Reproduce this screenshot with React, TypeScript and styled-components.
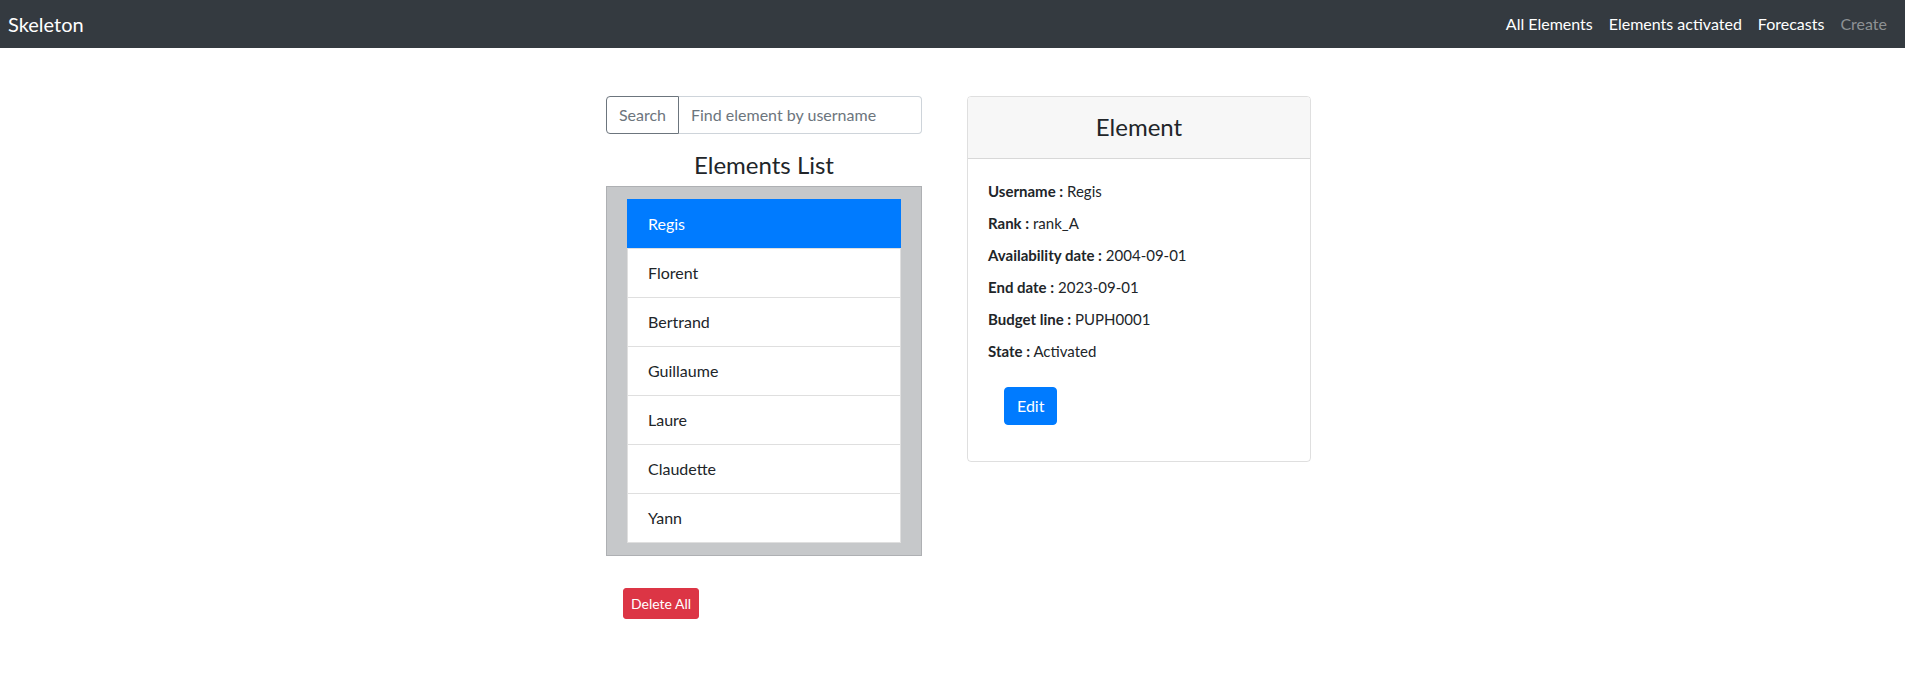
import React from "react";
import styled, { createGlobalStyle } from "styled-components";

const Global = createGlobalStyle`
  * { box-sizing: border-box; }
  body {
    margin: 0;
    font-family: "Segoe UI", Lato, "Noto Sans", sans-serif;
    font-size: 16px;
    line-height: 1.5;
    color: #212529;
    background: #fff;
  }
`;

const NavBar = styled.nav`
  height: 48px;
  background: #343a40;
  display: flex;
  align-items: center;
  justify-content: space-between;
  padding: 0 10px 0 8px;
`;

const Brand = styled.a`
  color: #fff;
  font-size: 20px;
  line-height: 30px;
  text-decoration: none;
`;

const NavLinks = styled.div`
  display: flex;
`;

const NavLink = styled.a<{ $disabled?: boolean }>`
  color: ${(p) => (p.$disabled ? "rgba(255,255,255,0.45)" : "#fff")};
  padding: 8px;
  text-decoration: none;
  line-height: 24px;
`;

const Main = styled.main`
  display: flex;
  justify-content: center;
  align-items: flex-start;
  gap: 45px;
  padding: 48px 0 0 12px;
`;

const LeftCol = styled.div`
  width: 316px;
  display: flex;
  flex-direction: column;
`;

const InputGroup = styled.div`
  display: flex;
  height: 38px;
`;

const SearchButton = styled.button`
  font: inherit;
  color: #6c757d;
  background: #fff;
  border: 1px solid #6c757d;
  border-radius: 4px 0 0 4px;
  padding: 0 10px;
  width: 73px;
  cursor: pointer;
`;

const SearchInput = styled.input`
  flex: 1;
  min-width: 0;
  font: inherit;
  color: #495057;
  border: 1px solid #ced4da;
  border-left: none;
  border-radius: 0 4px 4px 0;
  padding: 6px 12px;
  &::placeholder { color: #6c757d; }
`;

const ListTitle = styled.h4`
  margin: 17px 0 6px;
  font-size: 24px;
  font-weight: 400;
  line-height: 1.2;
  text-align: center;
`;

const ListBox = styled.div`
  background: #c6c8ca;
  border: 1px solid #aeb0b3;
  padding: 12px 20px;
`;

const List = styled.ul`
  list-style: none;
  margin: 0;
  padding: 0;
  background: #fff;
`;

const Item = styled.li<{ $active?: boolean }>`
  padding: 12px 20px;
  line-height: 24px;
  border: 1px solid ${(p) => (p.$active ? "#007bff" : "rgba(0,0,0,0.125)")};
  margin-top: -1px;
  background: ${(p) => (p.$active ? "#007bff" : "#fff")};
  color: ${(p) => (p.$active ? "#fff" : "#212529")};
  &:first-child { margin-top: 0; }
`;

const DangerButton = styled.button`
  align-self: flex-start;
  margin: 32px 0 0 17px;
  font: inherit;
  font-size: 14px;
  line-height: 21px;
  padding: 4px 7px;
  color: #fff;
  background: #dc3545;
  border: 1px solid #dc3545;
  border-radius: 3px;
`;

const Card = styled.div`
  width: 344px;
  border: 1px solid rgba(0,0,0,0.125);
  border-radius: 4px;
  overflow: hidden;
`;

const CardHeader = styled.div`
  background: #f7f7f7;
  border-bottom: 1px solid rgba(0,0,0,0.125);
  height: 62px;
  display: flex;
  align-items: center;
  justify-content: center;
`;

const CardTitle = styled.h4`
  margin: 0;
  font-size: 24px;
  font-weight: 400;
  line-height: 1.2;
`;

const CardBody = styled.div`
  padding: 20px;
`;

const Field = styled.p`
  margin: 0 0 8px;
  line-height: 24px;
  font-size: 15px;
  & b { font-weight: 700; }
`;

const PrimaryButton = styled.button`
  margin: 16px;
  font: inherit;
  line-height: 24px;
  padding: 6px 12px;
  color: #fff;
  background: #007bff;
  border: 1px solid #007bff;
  border-radius: 4px;
`;

const names = ["Regis", "Florent", "Bertrand", "Guillaume", "Laure", "Claudette", "Yann"];
const fields: [string, string][] = [
  ["Username", "Regis"],
  ["Rank", "rank_A"],
  ["Availability date", "2004-09-01"],
  ["End date", "2023-09-01"],
  ["Budget line", "PUPH0001"],
  ["State", "Activated"],
];

export default function App() {
  return (
    <>
      <Global />
      <NavBar>
        <Brand href="#">Skeleton</Brand>
        <NavLinks>
          <NavLink href="#">All Elements</NavLink>
          <NavLink href="#">Elements activated</NavLink>
          <NavLink href="#">Forecasts</NavLink>
          <NavLink href="#" $disabled>Create</NavLink>
        </NavLinks>
      </NavBar>
      <Main>
        <LeftCol>
          <InputGroup>
            <SearchButton>Search</SearchButton>
            <SearchInput placeholder="Find element by username" />
          </InputGroup>
          <ListTitle>Elements List</ListTitle>
          <ListBox>
            <List>
              {names.map((n, i) => (
                <Item key={n} $active={i === 0}>{n}</Item>
              ))}
            </List>
          </ListBox>
          <DangerButton>Delete All</DangerButton>
        </LeftCol>
        <Card>
          <CardHeader>
            <CardTitle>Element</CardTitle>
          </CardHeader>
          <CardBody>
            {fields.map(([k, v]) => (
              <Field key={k}>
                <b>{k} :</b> {v}
              </Field>
            ))}
            <PrimaryButton>Edit</PrimaryButton>
          </CardBody>
        </Card>
      </Main>
    </>
  );
}
